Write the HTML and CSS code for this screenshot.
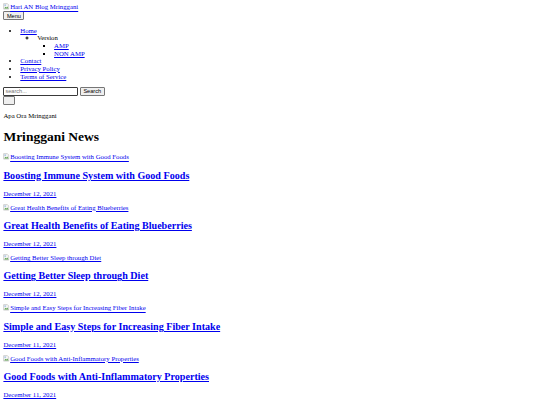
FILE: index.html
```html
<!DOCTYPE html>
<html lang="en">
<head>
<meta charset="utf-8">
<title>Mringgani News</title>
<link rel="stylesheet" href="styles.css">
</head>
<body class="page">
<header class="site-header">
  <div class="brand"><a class="brand-link" href="#"><svg class="broken" viewBox="0 0 16 16"><path d="M1.5 1.5h9l3 3v10h-12z" fill="#f4f4f4" stroke="#9a9a9a"/><path d="M3 13l3-4 2 2 2-3 3 5z" fill="#5aa04a"/><circle cx="5" cy="5" r="1.4" fill="#4a8fd8"/></svg>Hari AN Blog Mringgani</a></div>
  <button class="btn menu-btn" type="button">Menu</button>
  <nav>
    <ul class="nav-list">
      <li><a href="#">Home</a>
        <ul class="sub-list">
          <li>Version
            <ul class="sub-list">
              <li><a href="#">AMP</a></li>
              <li><a href="#">NON AMP</a></li>
            </ul>
          </li>
        </ul>
      </li>
      <li><a href="#">Contact</a></li>
      <li><a href="#">Privacy Policy</a></li>
      <li><a href="#">Terms of Service</a></li>
    </ul>
  </nav>
  <form class="search-form">
    <input class="search-input" type="text" placeholder="search..."><button class="btn search-btn" type="button">Search</button>
  </form>
  <button class="btn icon-btn" type="button" aria-label="toggle"></button>
</header>
<p class="tagline">Apa Ora Mringgani</p>
<h1 class="page-title">Mringgani News</h1>
<main class="posts">
  <article class="post">
    <a class="thumb" href="#"><svg class="broken" viewBox="0 0 16 16"><path d="M1.5 1.5h9l3 3v10h-12z" fill="#f4f4f4" stroke="#9a9a9a"/><path d="M3 13l3-4 2 2 2-3 3 5z" fill="#5aa04a"/><circle cx="5" cy="5" r="1.4" fill="#4a8fd8"/></svg>Boosting Immune System with Good Foods</a>
    <h2 class="post-title"><a href="#">Boosting Immune System with Good Foods</a></h2>
    <p class="post-date"><a href="#">December 12, 2021</a></p>
  </article>
  <article class="post">
    <a class="thumb" href="#"><svg class="broken" viewBox="0 0 16 16"><path d="M1.5 1.5h9l3 3v10h-12z" fill="#f4f4f4" stroke="#9a9a9a"/><path d="M3 13l3-4 2 2 2-3 3 5z" fill="#5aa04a"/><circle cx="5" cy="5" r="1.4" fill="#4a8fd8"/></svg>Great Health Benefits of Eating Blueberries</a>
    <h2 class="post-title"><a href="#">Great Health Benefits of Eating Blueberries</a></h2>
    <p class="post-date"><a href="#">December 12, 2021</a></p>
  </article>
  <article class="post">
    <a class="thumb" href="#"><svg class="broken" viewBox="0 0 16 16"><path d="M1.5 1.5h9l3 3v10h-12z" fill="#f4f4f4" stroke="#9a9a9a"/><path d="M3 13l3-4 2 2 2-3 3 5z" fill="#5aa04a"/><circle cx="5" cy="5" r="1.4" fill="#4a8fd8"/></svg>Getting Better Sleep through Diet</a>
    <h2 class="post-title"><a href="#">Getting Better Sleep through Diet</a></h2>
    <p class="post-date"><a href="#">December 12, 2021</a></p>
  </article>
  <article class="post">
    <a class="thumb" href="#"><svg class="broken" viewBox="0 0 16 16"><path d="M1.5 1.5h9l3 3v10h-12z" fill="#f4f4f4" stroke="#9a9a9a"/><path d="M3 13l3-4 2 2 2-3 3 5z" fill="#5aa04a"/><circle cx="5" cy="5" r="1.4" fill="#4a8fd8"/></svg>Simple and Easy Steps for Increasing Fiber Intake</a>
    <h2 class="post-title"><a href="#">Simple and Easy Steps for Increasing Fiber Intake</a></h2>
    <p class="post-date"><a href="#">December 11, 2021</a></p>
  </article>
  <article class="post">
    <a class="thumb" href="#"><svg class="broken" viewBox="0 0 16 16"><path d="M1.5 1.5h9l3 3v10h-12z" fill="#f4f4f4" stroke="#9a9a9a"/><path d="M3 13l3-4 2 2 2-3 3 5z" fill="#5aa04a"/><circle cx="5" cy="5" r="1.4" fill="#4a8fd8"/></svg>Good Foods with Anti-Inflammatory Properties</a>
    <h2 class="post-title"><a href="#">Good Foods with Anti-Inflammatory Properties</a></h2>
    <p class="post-date"><a href="#">December 11, 2021</a></p>
  </article>
  <article class="post">
    <a class="thumb" href="#" aria-label="Next post"><svg class="broken" viewBox="0 0 16 16"><path d="M1.5 1.5h9l3 3v10h-12z" fill="#f4f4f4" stroke="#9a9a9a"/><path d="M3 13l3-4 2 2 2-3 3 5z" fill="#5aa04a"/><circle cx="5" cy="5" r="1.4" fill="#4a8fd8"/></svg></a>
  </article>
</main>
</body>
</html>
```
FILE: styles.css
```css
html {
  background: #fff;
}
.page {
  margin: 3.4px;
  font-family: "Liberation Serif", "Times New Roman", serif;
  font-size: 6.75px;
  line-height: 7.65px;
  color: #000;
}
a {
  color: #0000ee;
}
.brand-link,
.thumb {
  display: inline-block;
}
.broken {
  width: 6.75px;
  height: 6.75px;
  vertical-align: -0.5px;
}
.btn {
  font-family: "Liberation Sans", Arial, sans-serif;
  font-size: 5.6px;
  line-height: 6.4px;
  color: #000;
  background: #efefef;
  border: 0.5px solid #767676;
  border-radius: 1px;
  padding: 0.5px 2.5px;
  margin: 0;
}
.menu-btn {
  display: block;
  height: 8.6px;
}
.nav-list {
  margin: 6.75px 0;
  padding-left: 16.9px;
}
.sub-list {
  margin: 0;
  padding-left: 16.9px;
}
.search-form {
  margin: 0;
  display: flex;
  align-items: center;
  gap: 1.5px;
}
.search-input {
  width: 75px;
  height: 8.6px;
  box-sizing: border-box;
  margin: 0;
  padding: 0 1px;
  border: 1px solid #3a3a3a;
  border-radius: 1px;
  font-family: "Liberation Sans", Arial, sans-serif;
  font-size: 5.6px;
}
.search-input::placeholder {
  color: #757575;
}
.search-btn {
  height: 8.6px;
}
.icon-btn {
  display: block;
  width: 12px;
  height: 9px;
  margin-top: 0.5px;
  padding: 0;
}
.tagline {
  margin: 6.75px 0;
}
.page-title {
  font-size: 13.5px;
  line-height: 15.5px;
  margin: 9.5px 0 9px;
}
.post-title {
  font-size: 10.1px;
  line-height: 11.6px;
  margin: 8.4px 0;
}
.post-date {
  margin: 8.4px 0 6.4px;
}
```
